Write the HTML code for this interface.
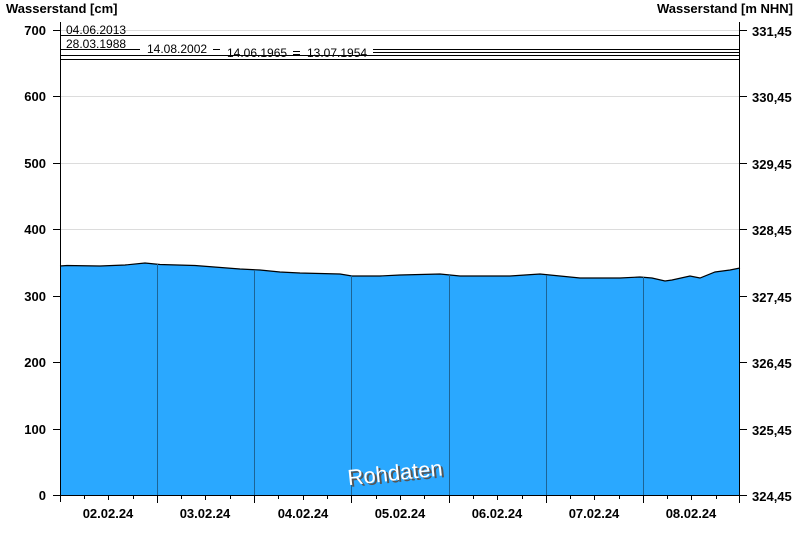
<!DOCTYPE html>
<html><head><meta charset="utf-8"><style>body{margin:0;background:#fff}svg{display:block}text{font-family:"Liberation Sans",Arial,sans-serif}</style></head><body>
<svg width="800" height="550" xmlns="http://www.w3.org/2000/svg">
<rect width="800" height="550" fill="#fff"/>
<g stroke="#dcdcdc" stroke-width="1">
<line x1="60" y1="30.5" x2="740" y2="30.5"/><line x1="60" y1="96.5" x2="740" y2="96.5"/><line x1="60" y1="163.5" x2="740" y2="163.5"/><line x1="60" y1="229.5" x2="740" y2="229.5"/>
</g>
<polygon fill="#2aa8ff" points="60,495 60,266 67,265.5 100,266 125,265 145,263 160,264.5 195,265.5 240,269 260,270 280,272 300,273 340,274 352,276 380,276 400,275 440,274 460,276 510,276 525,275 540,274 560,276 580,278 620,278 640,277 652,278 665,281 672,280 690,276 700,278 715,272 730,270 740,268 740,495"/>
<polyline fill="none" stroke="#000" stroke-width="1.2" points="60,266 67,265.5 100,266 125,265 145,263 160,264.5 195,265.5 240,269 260,270 280,272 300,273 340,274 352,276 380,276 400,275 440,274 460,276 510,276 525,275 540,274 560,276 580,278 620,278 640,277 652,278 665,281 672,280 690,276 700,278 715,272 730,270 740,268"/>
<g stroke="#1c6496" stroke-width="1">
<line x1="157.5" y1="264" x2="157.5" y2="495"/><line x1="254.5" y1="270" x2="254.5" y2="495"/><line x1="351.5" y1="275" x2="351.5" y2="495"/><line x1="449.5" y1="274" x2="449.5" y2="495"/><line x1="546.5" y1="275" x2="546.5" y2="495"/><line x1="643.5" y1="277" x2="643.5" y2="495"/>
</g>
<g stroke="#000" stroke-width="1">
<line x1="60" y1="35.5" x2="740" y2="35.5"/>
<line x1="60" y1="49.5" x2="140" y2="49.5"/>
<line x1="213" y1="49.5" x2="220" y2="49.5"/>
<line x1="293" y1="51.5" x2="300" y2="51.5"/>
<line x1="293" y1="54.5" x2="300" y2="54.5"/>
<line x1="373" y1="49.5" x2="740" y2="49.5"/>
<line x1="373" y1="52.5" x2="740" y2="52.5"/>
<line x1="60" y1="55.5" x2="740" y2="55.5"/>
<line x1="60" y1="59.5" x2="740" y2="59.5"/>
<line x1="60.5" y1="22" x2="60.5" y2="502"/>
<line x1="739.5" y1="22" x2="739.5" y2="495"/>
<line x1="60" y1="495.5" x2="740" y2="495.5"/>
</g>
<g font-size="12" fill="#000">
<text x="66" y="34">04.06.2013</text><text x="66" y="48">28.03.1988</text><text x="147" y="53">14.08.2002</text><text x="227" y="57">14.06.1965</text><text x="307" y="57">13.07.1954</text>
</g>
<g stroke="#000" stroke-width="1">
<line x1="53" y1="30.5" x2="60" y2="30.5"/><line x1="53" y1="96.5" x2="60" y2="96.5"/><line x1="53" y1="163.5" x2="60" y2="163.5"/><line x1="53" y1="229.5" x2="60" y2="229.5"/><line x1="53" y1="296.5" x2="60" y2="296.5"/><line x1="53" y1="362.5" x2="60" y2="362.5"/><line x1="53" y1="429.5" x2="60" y2="429.5"/><line x1="53" y1="495.5" x2="60" y2="495.5"/>
<line x1="740" y1="30.5" x2="747" y2="30.5"/><line x1="740" y1="96.5" x2="747" y2="96.5"/><line x1="740" y1="163.5" x2="747" y2="163.5"/><line x1="740" y1="229.5" x2="747" y2="229.5"/><line x1="740" y1="296.5" x2="747" y2="296.5"/><line x1="740" y1="362.5" x2="747" y2="362.5"/><line x1="740" y1="429.5" x2="747" y2="429.5"/><line x1="740" y1="495.5" x2="747" y2="495.5"/>
</g>
<g stroke="#000" stroke-width="1">
<line x1="157.5" y1="495" x2="157.5" y2="503"/><line x1="254.5" y1="495" x2="254.5" y2="503"/><line x1="351.5" y1="495" x2="351.5" y2="503"/><line x1="449.5" y1="495" x2="449.5" y2="503"/><line x1="546.5" y1="495" x2="546.5" y2="503"/><line x1="643.5" y1="495" x2="643.5" y2="503"/><line x1="739.5" y1="495" x2="739.5" y2="503"/>
<line x1="84.5" y1="495" x2="84.5" y2="499"/><line x1="108.5" y1="495" x2="108.5" y2="500"/><line x1="133.5" y1="495" x2="133.5" y2="499"/>
<line x1="181.5" y1="495" x2="181.5" y2="499"/><line x1="205.5" y1="495" x2="205.5" y2="500"/><line x1="230.5" y1="495" x2="230.5" y2="499"/>
<line x1="278.5" y1="495" x2="278.5" y2="499"/><line x1="303.5" y1="495" x2="303.5" y2="500"/><line x1="327.5" y1="495" x2="327.5" y2="499"/>
<line x1="376.5" y1="495" x2="376.5" y2="499"/><line x1="400.5" y1="495" x2="400.5" y2="500"/><line x1="424.5" y1="495" x2="424.5" y2="499"/>
<line x1="473.5" y1="495" x2="473.5" y2="499"/><line x1="497.5" y1="495" x2="497.5" y2="500"/><line x1="522.5" y1="495" x2="522.5" y2="499"/>
<line x1="570.5" y1="495" x2="570.5" y2="499"/><line x1="594.5" y1="495" x2="594.5" y2="500"/><line x1="619.5" y1="495" x2="619.5" y2="499"/>
<line x1="667.5" y1="495" x2="667.5" y2="499"/><line x1="691.5" y1="495" x2="691.5" y2="500"/><line x1="716.5" y1="495" x2="716.5" y2="499"/>
</g>
<g font-size="13" font-weight="bold" fill="#000">
<text x="6" y="13">Wasserstand [cm]</text>
<text x="793" y="13" text-anchor="end">Wasserstand [m NHN]</text>
<g text-anchor="end"><text x="46" y="35">700</text><text x="46" y="101">600</text><text x="46" y="168">500</text><text x="46" y="234">400</text><text x="46" y="301">300</text><text x="46" y="367">200</text><text x="46" y="434">100</text><text x="46" y="500">0</text></g>
<g><text x="752" y="36">331,45</text><text x="752" y="102">330,45</text><text x="752" y="169">329,45</text><text x="752" y="235">328,45</text><text x="752" y="302">327,45</text><text x="752" y="368">326,45</text><text x="752" y="435">325,45</text><text x="752" y="501">324,45</text></g>
<g text-anchor="middle"><text x="108" y="518">02.02.24</text><text x="205" y="518">03.02.24</text><text x="303" y="518">04.02.24</text><text x="400" y="518">05.02.24</text><text x="497" y="518">06.02.24</text><text x="594" y="518">07.02.24</text><text x="691" y="518">08.02.24</text></g>
</g>
<g transform="rotate(-6 398 470)" font-size="22">
<text x="349" y="482" fill="#555">Rohdaten</text>
<text x="347" y="480" fill="#fff">Rohdaten</text>
</g>
</svg>
</body></html>
